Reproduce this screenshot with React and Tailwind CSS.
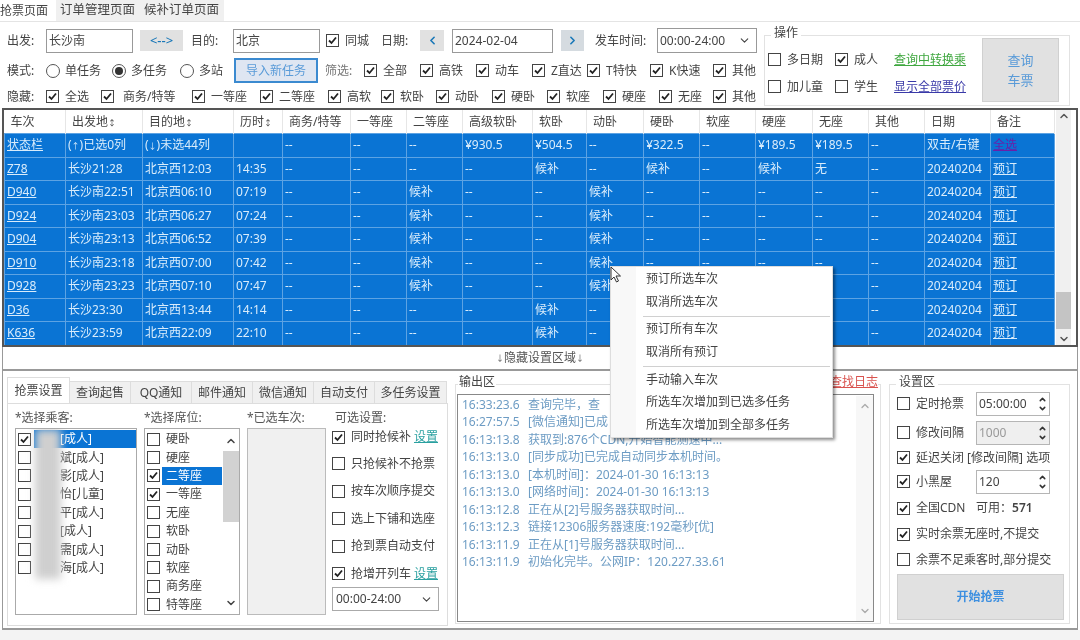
import { ChevronDown, ChevronUp, ChevronLeft, ChevronRight } from 'lucide-react'

const FONT = 'font-["Noto_Sans","Noto_Sans_CJK_SC",sans-serif]'

const COLS = [61, 77, 91, 49, 68, 56, 56, 70, 54, 57, 56, 56, 57, 56, 56, 66, 64]
const HEAD = ['车次', '出发地↕', '目的地↕', '历时↕', '商务/特等', '一等座', '二等座', '高级软卧', '软卧', '动卧', '硬卧', '软座', '硬座', '无座', '其他', '日期', '备注']

const d = '--'
const RIDGE = [d, d, '候补', d, d, '候补', d, d, d, d, d]
const SLOW = [d, d, d, d, '候补', d, '候补', d, '候补', '无', d]
// 右键菜单盖住的格子留空
const RIDGE_COVERED = [d, d, '候补', d, d, '候补', '', '', '', '', d]
const SLOW_COVERED = [d, d, d, d, '候补', d, '', '', '', '', d]
const ROWS = [
  ['状态栏', '(↑)已选0列', '(↓)未选44列', '', d, d, d, '¥930.5', '¥504.5', d, '¥322.5', d, '¥189.5', '¥189.5', d, '双击/右键', '全选'],
  ['Z78', '长沙21:28', '北京西12:03', '14:35', ...SLOW, '20240204', '预订'],
  ['D940', '长沙南22:51', '北京西06:10', '07:19', ...RIDGE, '20240204', '预订'],
  ['D924', '长沙南23:03', '北京西06:27', '07:24', ...RIDGE, '20240204', '预订'],
  ['D904', '长沙南23:13', '北京西06:52', '07:39', ...RIDGE, '20240204', '预订'],
  ['D910', '长沙南23:18', '北京西07:00', '07:42', ...RIDGE, '20240204', '预订'],
  ['D928', '长沙南23:23', '北京西07:10', '07:47', ...RIDGE_COVERED, '20240204', '预订'],
  ['D36', '长沙23:30', '北京西13:44', '14:14', ...SLOW_COVERED, '20240204', '预订'],
  ['K636', '长沙23:59', '北京西22:09', '22:10', ...SLOW_COVERED, '20240204', '预订'],
]

const PASSENGERS = ['[成人]', '斌[成人]', '影[成人]', '怡[儿童]', '平[成人]', '[成人]', '需[成人]', '海[成人]']
const SEATS = ['硬卧', '硬座', '二等座', '一等座', '无座', '软卧', '动卧', '软座', '商务座', '特等座']
const LOGS = [
  ['16:33:23.6', '查询完毕，查'],
  ['16:27:57.5', '[微信通知]已成'],
  ['16:13:13.8', '获取到:876个CDN,开始智能测速中...'],
  ['16:13:13.0', '[同步成功]已完成自动同步本机时间。'],
  ['16:13:13.0', '[本机时间]：2024-01-30 16:13:13'],
  ['16:13:13.0', '[网络时间]：2024-01-30 16:13:13'],
  ['16:13:12.8', '正在从[2]号服务器获取时间...'],
  ['16:13:12.3', '链接12306服务器速度:192毫秒[优]'],
  ['16:13:11.9', '正在从[1]号服务器获取时间...'],
  ['16:13:11.9', '初始化完毕。公网IP：120.227.33.61'],
]

// 箭头字形太宽，单独缩小
function Arrows({ text }) {
  return text.split(/([↑↓↕])/).map((part, i) =>
    /[↑↓↕]/.test(part) ? <span key={i} className="text-[8px]">{part}</span> : part
  )
}

function Box({ on, className = '' }) {
  return (
    <span className={`w-[13px] h-[13px] shrink-0 border border-[#444] bg-white flex items-center justify-center ${className}`}>
      {on && (
        <svg width="11" height="11" viewBox="0 0 11 11">
          <path d="M2 5.5 L4.5 8 L9 2.5" fill="none" stroke="#222" strokeWidth="1.8" />
        </svg>
      )}
    </span>
  )
}

function Check({ on = true, label, className = '' }) {
  return (
    <span className={`flex items-center gap-[6px] whitespace-nowrap shrink-0 ${className}`}>
      <Box on={on} />
      {label}
    </span>
  )
}

function Radio({ on, label, className = '' }) {
  return (
    <span className={`flex items-center gap-[5px] whitespace-nowrap shrink-0 ${className}`}>
      <span className="w-[14px] h-[14px] rounded-full border border-[#555] flex items-center justify-center">
        {on && <span className="w-[8px] h-[8px] rounded-full bg-[#333]" />}
      </span>
      {label}
    </span>
  )
}

function Spin({ value, disabled }) {
  return (
    <div className={`w-[74px] h-[24px] border border-[#b5b5b5] flex items-center pl-[2px] justify-between ${disabled ? 'bg-[#efefef] text-[#999]' : 'bg-white'}`}>
      <span>{value}</span>
      <span className="w-[14px] flex flex-col items-center text-[#333]">
        <ChevronUp size={9} strokeWidth={4} />
        <ChevronDown size={9} strokeWidth={4} />
      </span>
    </div>
  )
}

function TopForm() {
  return (
    <div className="h-[88px] flex border-t border-[#e4e4e4] pl-[7px] pr-[10px] shrink-0">
      <div className="w-[757px] shrink-0">
        <div className="h-[35px] flex items-center pt-[2px]">
          <span className="w-[39px] shrink-0">出发:</span>
          <div className="w-[87px] h-[24px] border border-[#999] pl-[2px] flex items-center shrink-0">长沙南</div>
          <div className="w-[43px] h-[21px] ml-[7px] bg-[#e1e1e1] text-[#1a78b8] text-[13px] font-medium flex items-center justify-center shrink-0">&lt;--&gt;</div>
          <span className="w-[42px] ml-[8px] shrink-0">目的:</span>
          <div className="w-[87px] h-[24px] border border-[#999] pl-[2px] flex items-center shrink-0">北京</div>
          <Check label="同城" className="ml-[6px] w-[55px]" />
          <span className="w-[39px] shrink-0">日期:</span>
          <div className="w-[24px] h-[21px] bg-[#e1e1e1] text-[#1a78b8] flex items-center justify-center shrink-0"><ChevronLeft size={13} strokeWidth={3} /></div>
          <div className="w-[101px] h-[24px] ml-[8px] border border-[#999] pl-[2px] flex items-center shrink-0">2024-02-04</div>
          <div className="w-[23px] h-[21px] ml-[8px] bg-[#d5dbe0] text-[#1a78b8] flex items-center justify-center shrink-0"><ChevronRight size={13} strokeWidth={3} /></div>
          <span className="w-[62px] ml-[11px] shrink-0">发车时间:</span>
          <div className="w-[100px] h-[25px] border border-[#999] pl-[2px] pr-[5px] flex items-center justify-between shrink-0">
            00:00-24:00
            <ChevronDown size={13} />
          </div>
        </div>
        <div className="h-[27px] flex items-center">
          <span className="w-[39px] shrink-0">模式:</span>
          <Radio label="单任务" className="w-[66px]" />
          <Radio on label="多任务" className="w-[68px]" />
          <Radio label="多站" className="w-[54px]" />
          <div className="w-[84px] h-[25px] bg-[#dfe6f2] border-2 border-[#3b8ad0] text-[#5a9bd8] flex items-center justify-center shrink-0">导入新任务</div>
          <span className="w-[39px] ml-[7px] shrink-0 text-[#777]">筛选:</span>
          <Check label="全部" className="w-[56px]" />
          <Check label="高铁" className="w-[56px]" />
          <Check label="动车" className="w-[56px]" />
          <Check label="Z直达" className="w-[55px]" />
          <Check label="T特快" className="w-[63px]" />
          <Check label="K快速" className="w-[63px]" />
          <Check label="其他" className="w-[44px]" />
        </div>
        <div className="h-[25px] flex items-center">
          <span className="w-[39px] shrink-0">隐藏:</span>
          <Check label="全选" className="w-[55px]" />
          <Check label="商务/特等" className="w-[91px] gap-[9px]" />
          <Check label="一等座" className="w-[68px]" />
          <Check label="二等座" className="w-[68px]" />
          <Check label="高软" className="w-[53px]" />
          <Check label="软卧" className="w-[55px]" />
          <Check label="动卧" className="w-[56px]" />
          <Check label="硬卧" className="w-[55px]" />
          <Check label="软座" className="w-[56px]" />
          <Check label="硬座" className="w-[56px]" />
          <Check label="无座" className="w-[54px]" />
          <Check label="其他" className="w-[44px]" />
        </div>
      </div>
      <div className="relative w-[306px] h-[71px] mt-[13px] border border-[#e2e2e2] flex items-start shrink-0">
        <span className="absolute -top-[9px] left-[6px] bg-white px-[3px] leading-none">操作</span>
        <div className="w-[214px] ml-[3px] mt-[10px] shrink-0">
          <div className="h-[27px] flex items-center">
            <Check on={false} label="多日期" className="w-[67px]" />
            <Check label="成人" className="w-[59px]" />
            <span className="text-[#3fa73f] underline">查询中转换乘</span>
          </div>
          <div className="h-[27px] flex items-center">
            <Check on={false} label="加儿童" className="w-[67px]" />
            <Check on={false} label="学生" className="w-[59px]" />
            <span className="text-[#3a3aa8] underline">显示全部票价</span>
          </div>
        </div>
        <div className="w-[77px] h-[64px] mt-[2px] bg-[#e1e1e1] border border-[#d0d0d0] text-[#5a9bd8] text-[13px] leading-[20px] flex items-center justify-center text-center shrink-0">查询<br />车票</div>
      </div>
    </div>
  )
}

function TrainTable() {
  return (
    <div className="mx-[2px] h-[239px] border-2 border-[#555] flex overflow-hidden shrink-0 mt-[-1px]">
      <table className="table-fixed border-collapse w-[1050px] shrink-0 self-start">
        <colgroup>
          {COLS.map((w, i) => <col key={i} style={{ width: w }} />)}
        </colgroup>
        <thead>
          <tr className="h-[23.5px]">
            {HEAD.map(h => (
              <th key={h} className="font-normal text-left pl-[6px] whitespace-nowrap border-r border-[#e6e6e6]"><Arrows text={h} /></th>
            ))}
          </tr>
        </thead>
        <tbody>
          {ROWS.map((row, r) => (
            <tr key={r} className="h-[23.5px] bg-[#0a74d4] text-[#d9ecfb]">
              {row.map((c, i) => {
                const first = i === 0
                const last = i === 16
                const purple = last && r === 0
                return (
                  <td key={i} className={`pl-[2px] whitespace-nowrap overflow-hidden border border-[#5da3e3] ${first || last ? 'underline' : ''} ${purple ? 'text-[#6a1fa8]' : ''}`}>
                    <Arrows text={c} />
                  </td>
                )
              })}
            </tr>
          ))}
        </tbody>
      </table>
      <div className="w-[15px] ml-px bg-[#f0f0f0] flex flex-col items-center justify-between text-[#555] shrink-0">
        <ChevronUp size={12} strokeWidth={3} />
        <div className="w-full h-[37px] mt-auto mb-[4px] bg-[#c4c4c4]" />
        <ChevronDown size={12} strokeWidth={3} />
      </div>
    </div>
  )
}

function LeftTabs() {
  const tabs = ['查询起售', 'QQ通知', '邮件通知', '微信通知', '自动支付', '多任务设置']
  return (
    <div className="w-[441px] ml-[4px] mt-[6px] shrink-0">
      <div className="h-[26px] flex items-end">
        <div className="w-[63px] h-[26px] border border-b-0 border-[#ddd] flex items-center justify-center bg-white">抢票设置</div>
        {tabs.map((t, i) => (
          <div key={t} className={`h-[22px] bg-[#f0f0f0] border-t border-r border-[#ddd] flex items-center justify-center whitespace-nowrap ${i === 5 ? 'w-[72px]' : 'w-[61px]'}`}>{t}</div>
        ))}
      </div>
      <div className="h-[223px] border border-[#ddd] pl-[7px] pt-[4px]">
        <div className="flex h-[20px] items-center text-[#555]">
          <span className="w-[129px]">*选择乘客:</span>
          <span className="w-[103px]">*选择席位:</span>
          <span className="w-[88px]">*已选车次:</span>
          <span>可选设置:</span>
        </div>
        <div className="flex">
          <div className="relative w-[122px] h-[187px] border border-[#aaa] pl-[2px] pt-[1px] shrink-0 overflow-hidden">
            {PASSENGERS.map((p, i) => (
              <div key={i} className="h-[18.4px] flex items-center">
                <Box on={i === 0} />
                <span className={`flex-1 h-full flex items-center ml-[3px] pl-[26px] ${i === 0 ? 'bg-[#0a74d4] text-white' : ''}`}>{p}</span>
              </div>
            ))}
            <div className="absolute left-[19px] top-0 w-[26px] h-[150px] bg-[#cfcfcf] blur-[4px]" />
          </div>
          <div className="w-[96px] h-[187px] ml-[7px] border border-[#aaa] pl-[2px] pt-[1px] flex shrink-0 overflow-hidden">
            <div className="w-[75px] shrink-0">
              {SEATS.map((s, i) => (
                <div key={s} className="h-[18.4px] flex items-center">
                  <Box on={i === 2 || i === 3} />
                  <span className={`h-full flex-1 flex items-center pl-[4px] ml-[2px] ${i === 2 ? 'bg-[#0a74d4] text-white' : ''}`}>{s}</span>
                </div>
              ))}
            </div>
            <div className="w-[16px] ml-[1px] flex flex-col items-center text-[#444]">
              <ChevronUp size={12} strokeWidth={3} className="mt-[5px]" />
              <div className="w-full h-[71px] mt-[4px] bg-[#d2d2d2]" />
              <ChevronDown size={12} strokeWidth={3} className="mt-auto mb-[5px]" />
            </div>
          </div>
          <div className="w-[79px] h-[187px] ml-[7px] bg-[#f0f0f0] border border-[#bbb] shrink-0" />
          <div className="ml-[6px] w-[107px] shrink-0">
            <div className="h-[18px] mb-[4px] flex items-center justify-between pr-[1px]">
              <Check label="同时抢候补" />
              <span className="text-[#2aa0a0] underline">设置</span>
            </div>
            <div className="h-[27.5px] flex items-center"><Check on={false} label="只抢候补不抢票" /></div>
            <div className="h-[27.5px] flex items-center"><Check on={false} label="按车次顺序提交" /></div>
            <div className="h-[27.5px] flex items-center"><Check on={false} label="选上下铺和选座" /></div>
            <div className="h-[27.5px] flex items-center"><Check on={false} label="抢到票自动支付" /></div>
            <div className="h-[27px] flex items-center justify-between pr-[1px]">
              <Check label="抢增开列车" />
              <span className="text-[#2aa0a0] underline">设置</span>
            </div>
            <div className="h-[24px] border border-[#aaa] pl-[3px] pr-[5px] flex items-center justify-between">
              00:00-24:00
              <ChevronDown size={13} />
            </div>
          </div>
        </div>
      </div>
    </div>
  )
}

function OutputBox() {
  return (
    <div className="relative w-[426px] h-[240px] ml-[7px] mt-[13px] border border-[#e2e2e2] pl-[1px] pr-[6px] pt-[9px] shrink-0">
      <span className="absolute -top-[9px] left-[2px] bg-white px-[1px] leading-none">输出区</span>
      <span className="absolute -top-[9px] right-[2px] bg-white text-[#d9534f] underline leading-none">查找日志</span>
      <div className="h-[228px] border border-[#888] flex pl-[4px] pt-[1px]">
        <div className="flex-1 text-[#6d9cc4]">
          {LOGS.map((l, i) => (
            <div key={i} className="h-[17.5px] flex items-center whitespace-nowrap">
              <span className="w-[66px] shrink-0">{l[0]}</span>
              <span>{l[1]}</span>
            </div>
          ))}
        </div>
        <div className="w-[17px] bg-[#f7f7f7] flex flex-col items-center justify-between py-[4px] text-[#aaa]">
          <ChevronUp size={12} strokeWidth={2.5} />
          <ChevronDown size={12} strokeWidth={2.5} />
        </div>
      </div>
    </div>
  )
}

function SettingsBox() {
  return (
    <div className="relative w-[181px] h-[240px] ml-[8px] mt-[13px] border border-[#e2e2e2] pl-[7px] pr-[5px] pt-[4px] shrink-0">
      <span className="absolute -top-[9px] left-[6px] bg-white px-[3px] leading-none">设置区</span>
      <div className="h-[29px] flex items-center justify-between pr-[14px]">
        <Check on={false} label="定时抢票" />
        <Spin value="05:00:00" />
      </div>
      <div className="h-[29px] flex items-center justify-between pr-[14px]">
        <Check on={false} label="修改间隔" />
        <Spin value="1000" disabled />
      </div>
      <div className="h-[21px] flex items-center"><Check label="延迟关闭 [修改间隔] 选项" /></div>
      <div className="h-[27px] flex items-center justify-between pr-[14px]">
        <Check label="小黑屋" />
        <Spin value="120" />
      </div>
      <div className="h-[26px] flex items-center">
        <Check label="全国CDN" className="w-[79px]" />
        <span>可用：<span className="font-semibold">571</span></span>
      </div>
      <div className="h-[26px] flex items-center"><Check label="实时余票无座时,不提交" /></div>
      <div className="h-[25px] flex items-center"><Check on={false} label="余票不足乘客时,部分提交" /></div>
      <div className="h-[46px] mt-[2px] bg-[#e1e1e1] border border-[#d0d0d0] text-[#3d8fe0] font-semibold flex items-center justify-center">开始抢票</div>
    </div>
  )
}

function ContextMenu() {
  const groups = [
    ['预订所选车次', '取消所选车次'],
    ['预订所有车次', '取消所有预订'],
    ['手动输入车次', '所选车次增加到已选多任务', '所选车次增加到全部多任务'],
  ]
  return (
    <div className="absolute left-[610px] top-[266px] w-[223px] h-[172px] bg-white flex shadow-[2px_2px_3px_rgba(0,0,0,0.45)] border border-[#ddd]">
      <div className="w-[25px] bg-[#f8f8f8] shrink-0" />
      <div className="flex-1 pl-[10px] pt-[1px]">
        {groups.map((g, i) => (
          <div key={i} className={i > 0 ? 'border-t border-[#d0d0d0] mt-[3px] pt-[1px] -ml-[3px] pl-[3px] mr-[2px]' : ''}>
            {g.map(t => <div key={t} className="h-[22.6px] flex items-center whitespace-nowrap">{t}</div>)}
          </div>
        ))}
      </div>
    </div>
  )
}

function Cursor() {
  return (
    <svg className="absolute left-[610px] top-[266px]" width="12" height="18" viewBox="0 0 12 18">
      <path d="M1 1 L1 14 L4 11 L6.5 16 L8.5 15 L6 10 L10.5 10 Z" fill="#fff" stroke="#333" strokeWidth="1" />
    </svg>
  )
}

export default function App() {
  return (
    <div className={`relative w-[1080px] h-[640px] overflow-hidden bg-white text-[12px] leading-none text-[#444] flex flex-col blur-[0.5px] ${FONT}`}>
      <div className="h-[21px] flex items-stretch shrink-0">
        <div className="w-[55px] flex items-center">抢票页面</div>
        <div className="w-[83px] bg-[#f0f0f0] ml-px flex items-center justify-center text-[12.5px]">订单管理页面</div>
        <div className="w-[85px] bg-[#f0f0f0] flex items-center justify-center text-[12.5px]">候补订单页面</div>
      </div>
      <TopForm />
      <TrainTable />
      <div className="mx-[2px] h-[24px] border-b-2 border-x border-[#999] flex items-center justify-center text-[#555] shrink-0"><Arrows text="↓隐藏设置区域↓" /></div>
      <div className="mx-[2px] h-[259px] border-b-2 border-x border-[#999] flex shrink-0">
        <LeftTabs />
        <OutputBox />
        <SettingsBox />
      </div>
      <div className="flex-1 bg-[#f3f3f3]" />
      <ContextMenu />
      <Cursor />
    </div>
  )
}
